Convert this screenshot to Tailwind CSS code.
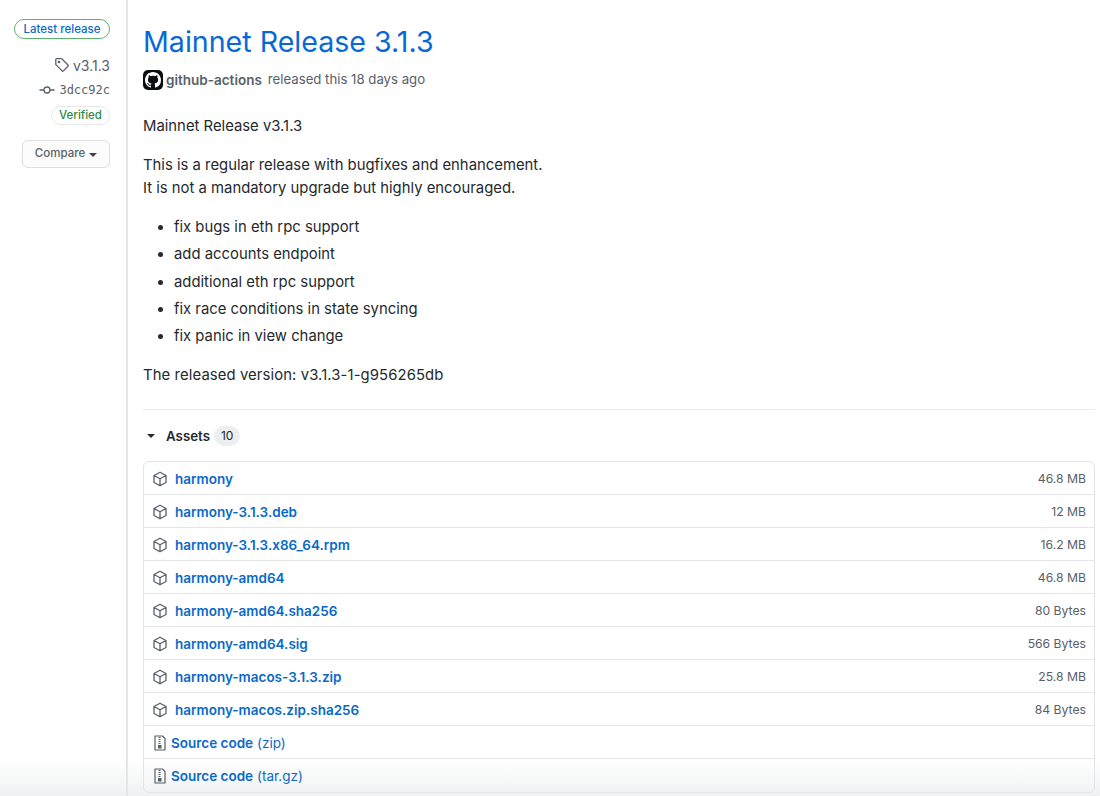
<!DOCTYPE html>
<html lang="en">
<head>
  <meta charset="UTF-8" />
  <title>Mainnet Release 3.1.3</title>
  <script src="https://cdn.jsdelivr.net/npm/@tailwindcss/browser@4"></script>
</head>
<body class="bg-white font-['Inter',sans-serif] text-[#24292e] overflow-hidden">
  <div class="relative flex h-[796px] w-[1100px] overflow-hidden">
    <!-- soft fade along the bottom of the capture, behind the content -->
    <div class="pointer-events-none absolute inset-x-0 bottom-0 h-[36px] bg-gradient-to-b from-transparent to-[#f0f1f2]"></div>

    <!-- left meta column -->
    <aside class="relative w-[128px] shrink-0 border-r-2 border-[#e4e6e8] pr-[16px] flex flex-col items-end pt-[19px]">
      <span class="h-[20px] w-[96px] rounded-full border border-[#5fb070] text-[11.5px] leading-[18px] text-center font-medium text-[#0969c9]">Latest release</span>
      <div class="mt-[17px] h-[18px] flex items-center gap-[3px] text-[14px] text-[#586069]">
        <svg width="16" height="16" viewBox="0 0 16 16" fill="none" stroke="#586069" stroke-width="1.3" stroke-linejoin="round"><path d="M1.800 2.600c0-.5.4-.9.9-.9h4.600c.3 0 .5.100.7.300l6 6c.4.400.4.900 0 1.300l-4.600 4.600c-.4.400-.9.400-1.300 0l-6-6a1 1 0 0 1-.3-.7z"/><circle cx="5" cy="5" r=".7" fill="#586069"/></svg>
        <span>v3.1.3</span>
      </div>
      <div class="mt-[7px] h-[18px] flex items-center gap-[4px] font-['DejaVu_Sans_Mono',monospace] text-[12px] text-[#586069]">
        <svg width="16" height="16" viewBox="0 0 16 16" fill="none" stroke="#586069" stroke-width="1.3"><circle cx="8" cy="8" r="3"/><path d="M0.500 8h4.400M11.100 8h4.400"/></svg>
        <span>3dcc92c</span>
      </div>
      <span class="mt-[7px] h-[19px] w-[59px] rounded-full border border-[#e6e8ea] text-[11.5px] leading-[17px] text-center font-medium text-[#2f8a46]">Verified</span>
      <div class="mt-[15px] h-[28px] w-[88px] rounded-[6px] border border-[#dcdfe2] bg-[#fcfcfc] flex items-center justify-center gap-[4px] text-[11.5px] font-medium text-[#586069]">
        Compare
        <span class="mt-[1px] h-0 w-0 border-x-[4px] border-t-[4px] border-x-transparent border-t-[#3c4248]"></span>
      </div>
    </aside>

    <!-- release body -->
    <main class="relative flex-1 pl-[15px] pr-[5px]">
      <h1 class="mt-[21px] text-[28.6px] leading-[42px] font-normal text-[#0969d4]">Mainnet Release 3.1.3</h1>
      <div class="mt-[6px] flex items-center h-[22px] text-[13.2px] text-[#586069]">
        <svg class="mr-[3px]" width="20" height="20" viewBox="0 0 20 20"><rect width="20" height="20" rx="5" fill="#0b0d0f"/><path transform="translate(2 2)" fill="#fff" d="M8 0C3.580 0 0 3.580 0 8c0 3.540 2.290 6.530 5.470 7.590.4.070.55-.17.55-.38 0-.19-.01-.82-.01-1.490-2.010.37-2.530-.49-2.690-.94-.09-.23-.48-.94-.82-1.130-.28-.15-.68-.52-.01-.53.63-.01 1.080.58 1.230.82.72 1.210 1.870.87 2.330.66.07-.52.28-.87.51-1.070-1.780-.2-3.640-.89-3.640-3.950 0-.87.31-1.590.82-2.150-.08-.2-.36-1.020.08-2.120 0 0 .67-.21 2.200.82.64-.18 1.320-.27 2-.27.68 0 1.360.09 2 .27 1.530-1.040 2.200-.82 2.200-.82.44 1.100.16 1.920.08 2.120.51.56.82 1.270.82 2.150 0 3.070-1.870 3.750-3.650 3.950.29.25.54.73.54 1.480 0 1.070-.01 1.930-.01 2.200 0 .21.15.46.55.38A8.013 8.013 0 0 0 16 8c0-4.420-3.580-8-8-8z"/></svg>
        <span class="font-semibold text-[13.5px]">github-actions</span>
        <span class="ml-[6px]">released this 18 days ago</span>
      </div>

      <div class="mt-[25px] text-[14.85px] leading-[21px] text-[#24292e]">
        <p>Mainnet Release v3.1.3</p>
        <p class="mt-[17px] leading-[23px]">This is a regular release with bugfixes and enhancement.<br>It is not a mandatory upgrade but highly encouraged.</p>
        <ul class="mt-[14px] list-disc pl-[31px] leading-[27.3px]">
          <li>fix bugs in eth rpc support</li>
          <li>add accounts endpoint</li>
          <li>additional eth rpc support</li>
          <li>fix race conditions in state syncing</li>
          <li>fix panic in view change</li>
        </ul>
        <p class="mt-[15px] tracking-[0.1px]">The released version: v3.1.3-1-g956265db</p>
      </div>

      <div class="mt-[23px] border-t border-[#e8eaec] pt-[16px]">
        <div class="flex items-center h-[20px] text-[13.3px] font-semibold text-[#24292e]">
          <span class="ml-[4px] mr-[11px] h-0 w-0 border-x-[4px] border-t-[4px] border-x-transparent border-t-[#24292e]"></span>
          <span>Assets</span>
          <span class="ml-[4px] h-[20px] rounded-full bg-[#eceef0] px-[7px] text-[12px] leading-[20px] font-normal">10</span>
        </div>

        <div id="assets" class="mt-[15px] rounded-[6px] border border-[#e1e4e8] text-[13.5px]">
          <div class="flex items-center justify-between h-[33px] border-b border-[#e4e6e8] pt-[1px] pl-[8px] pr-[8px]">
            <a class="flex items-center font-semibold text-[#0969c9]">
              <svg class="mr-[7px]" width="16" height="16" viewBox="0 0 16 16" fill="none" stroke="#586069" stroke-width="1.3" stroke-linejoin="round"><path d="M8 1.200l6 3.300v7L8 14.800l-6-3.300v-7zM2 4.500l6 3.300 6-3.300M8 7.800v7"/></svg>
              harmony
            </a>
            <span class="text-[12.2px] text-[#586069]">46.8 MB</span>
          </div>
          <div class="flex items-center justify-between h-[33px] border-b border-[#e4e6e8] pt-[1px] pl-[8px] pr-[8px]">
            <a class="flex items-center font-semibold text-[#0969c9]">
              <svg class="mr-[7px]" width="16" height="16" viewBox="0 0 16 16" fill="none" stroke="#586069" stroke-width="1.3" stroke-linejoin="round"><path d="M8 1.200l6 3.300v7L8 14.800l-6-3.300v-7zM2 4.500l6 3.300 6-3.300M8 7.800v7"/></svg>
              harmony-3.1.3.deb
            </a>
            <span class="text-[12.2px] text-[#586069]">12 MB</span>
          </div>
          <div class="flex items-center justify-between h-[33px] border-b border-[#e4e6e8] pt-[1px] pl-[8px] pr-[8px]">
            <a class="flex items-center font-semibold text-[#0969c9]">
              <svg class="mr-[7px]" width="16" height="16" viewBox="0 0 16 16" fill="none" stroke="#586069" stroke-width="1.3" stroke-linejoin="round"><path d="M8 1.200l6 3.300v7L8 14.800l-6-3.300v-7zM2 4.500l6 3.300 6-3.300M8 7.800v7"/></svg>
              harmony-3.1.3.x86_64.rpm
            </a>
            <span class="text-[12.2px] text-[#586069]">16.2 MB</span>
          </div>
          <div class="flex items-center justify-between h-[33px] border-b border-[#e4e6e8] pt-[1px] pl-[8px] pr-[8px]">
            <a class="flex items-center font-semibold text-[#0969c9]">
              <svg class="mr-[7px]" width="16" height="16" viewBox="0 0 16 16" fill="none" stroke="#586069" stroke-width="1.3" stroke-linejoin="round"><path d="M8 1.200l6 3.300v7L8 14.800l-6-3.300v-7zM2 4.500l6 3.300 6-3.300M8 7.800v7"/></svg>
              harmony-amd64
            </a>
            <span class="text-[12.2px] text-[#586069]">46.8 MB</span>
          </div>
          <div class="flex items-center justify-between h-[33px] border-b border-[#e4e6e8] pt-[1px] pl-[8px] pr-[8px]">
            <a class="flex items-center font-semibold text-[#0969c9]">
              <svg class="mr-[7px]" width="16" height="16" viewBox="0 0 16 16" fill="none" stroke="#586069" stroke-width="1.3" stroke-linejoin="round"><path d="M8 1.200l6 3.300v7L8 14.800l-6-3.300v-7zM2 4.500l6 3.300 6-3.300M8 7.800v7"/></svg>
              harmony-amd64.sha256
            </a>
            <span class="text-[12.2px] text-[#586069]">80 Bytes</span>
          </div>
          <div class="flex items-center justify-between h-[33px] border-b border-[#e4e6e8] pt-[1px] pl-[8px] pr-[8px]">
            <a class="flex items-center font-semibold text-[#0969c9]">
              <svg class="mr-[7px]" width="16" height="16" viewBox="0 0 16 16" fill="none" stroke="#586069" stroke-width="1.3" stroke-linejoin="round"><path d="M8 1.200l6 3.300v7L8 14.800l-6-3.300v-7zM2 4.500l6 3.300 6-3.300M8 7.800v7"/></svg>
              harmony-amd64.sig
            </a>
            <span class="text-[12.2px] text-[#586069]">566 Bytes</span>
          </div>
          <div class="flex items-center justify-between h-[33px] border-b border-[#e4e6e8] pt-[1px] pl-[8px] pr-[8px]">
            <a class="flex items-center font-semibold text-[#0969c9]">
              <svg class="mr-[7px]" width="16" height="16" viewBox="0 0 16 16" fill="none" stroke="#586069" stroke-width="1.3" stroke-linejoin="round"><path d="M8 1.200l6 3.300v7L8 14.800l-6-3.300v-7zM2 4.500l6 3.300 6-3.300M8 7.800v7"/></svg>
              harmony-macos-3.1.3.zip
            </a>
            <span class="text-[12.2px] text-[#586069]">25.8 MB</span>
          </div>
          <div class="flex items-center justify-between h-[33px] border-b border-[#e4e6e8] pt-[1px] pl-[8px] pr-[8px]">
            <a class="flex items-center font-semibold text-[#0969c9]">
              <svg class="mr-[7px]" width="16" height="16" viewBox="0 0 16 16" fill="none" stroke="#586069" stroke-width="1.3" stroke-linejoin="round"><path d="M8 1.200l6 3.300v7L8 14.800l-6-3.300v-7zM2 4.500l6 3.300 6-3.300M8 7.800v7"/></svg>
              harmony-macos.zip.sha256
            </a>
            <span class="text-[12.2px] text-[#586069]">84 Bytes</span>
          </div>
          <div class="flex items-center h-[33px] border-b border-[#e4e6e8] pt-[1px] pl-[8px] pr-[8px]">
            <a class="flex items-center text-[#0969c9]">
              <svg class="mr-[3px]" width="16" height="16" viewBox="0 0 16 16" fill="none" stroke="#586069" stroke-width="1.2" stroke-linejoin="round"><path d="M3 1h7.500l2.500 2.500V15H3z"/><path d="M6.500 2.500h2M6.500 4.500h2M6.500 6.500h2M6.500 8.500h2" stroke-width="1"/><rect x="6" y="10" width="3.500" height="3.500" fill="#586069" stroke="none"/></svg>
              <span class="font-semibold">Source code</span><span class="ml-[4px] font-normal">(zip)</span>
            </a>
          </div>
          <div class="flex items-center h-[33px] pl-[8px] pr-[8px]">
            <a class="flex items-center text-[#0969c9]">
              <svg class="mr-[3px]" width="16" height="16" viewBox="0 0 16 16" fill="none" stroke="#586069" stroke-width="1.2" stroke-linejoin="round"><path d="M3 1h7.500l2.500 2.500V15H3z"/><path d="M6.500 2.500h2M6.500 4.500h2M6.500 6.500h2M6.500 8.500h2" stroke-width="1"/><rect x="6" y="10" width="3.500" height="3.500" fill="#586069" stroke="none"/></svg>
              <span class="font-semibold">Source code</span><span class="ml-[4px] font-normal">(tar.gz)</span>
            </a>
          </div>
        </div>
      </div>
    </main>
  </div>
</body>
</html>
